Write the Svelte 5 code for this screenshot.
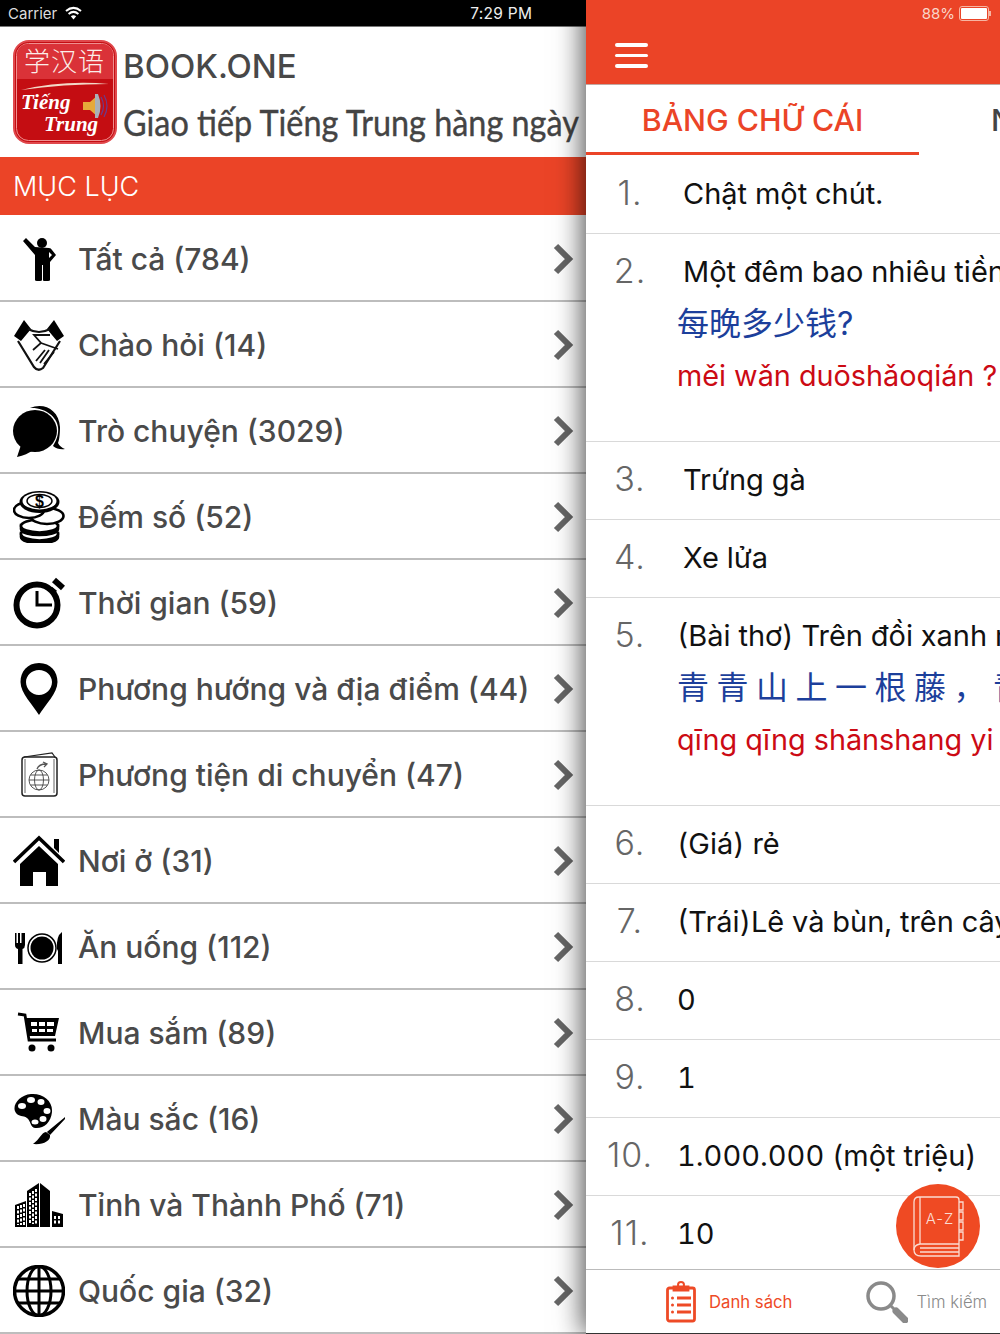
<script>
  const topics = [
    { label: 'Tất cả (784)', icon: person },
    { label: 'Chào hỏi (14)', icon: handshake },
    { label: 'Trò chuyện (3029)', icon: chat },
    { label: 'Đếm số (52)', icon: coins },
    { label: 'Thời gian (59)', icon: timer },
    { label: 'Phương hướng và địa điểm (44)', icon: pin },
    { label: 'Phương tiện di chuyển (47)', icon: passport },
    { label: 'Nơi ở (31)', icon: house },
    { label: 'Ăn uống (112)', icon: dining },
    { label: 'Mua sắm (89)', icon: cart },
    { label: 'Màu sắc (16)', icon: palette },
    { label: 'Tỉnh và Thành Phố (71)', icon: city },
    { label: 'Quốc gia (32)', icon: globe }
  ];

  // indent: the first rows carry a leading space in the source text
  const phrases = [
    { text: 'Chật một chút.', indent: true },
    { text: 'Một đêm bao nhiêu tiền?', indent: true, zh: '每晚多少钱?', py: 'měi wǎn duōshǎoqián ?' },
    { text: 'Trứng gà', indent: true },
    { text: 'Xe lửa', indent: true },
    { text: '(Bài thơ) Trên đồi xanh mọc một dây leo', zh: '青 青 山 上 一 根 藤 ， 青 青', py: 'qīng qīng shānshang yi gēn téng' },
    { text: '(Giá) rẻ' },
    { text: '(Trái)Lê và bùn, trên cây' },
    { text: '0' },
    { text: '1' },
    { text: '1.000.000 (một triệu)' },
    { text: '10', last: true }
  ];
</script>

{#snippet person()}
  <circle cx="29" cy="10" r="5" />
  <path d="M10 8 L13 5 L22 14 L36 15 Q38 15 39 17 L43 22 L37 29 L37 47 Q37 48 35 48 L31 48 Q30 48 30 47 L30 32 L29 32 L29 47 Q29 48 27 48 L24 48 Q22 48 22 47 L22 22 Z" />
  <path d="M36 19 L39 22 L36 25 Z" fill="#fff" />
{/snippet}

{#snippet handshake()}
  <path d="M1 17 L11 1 L18 10 L8 22 Z M51 17 L41 1 L34 10 L44 22 Z" />
  <g fill="none" stroke="#111">
    <path d="M5 22 L21 48 Q25 53 30 49 L47 22" stroke-width="2.200" />
    <path d="M15 10 Q26 16 37 10" stroke-width="2" />
    <path d="M37 16 L21 16 L28 24 L20 31 M28 24 L45 30" stroke-width="1.800" />
    <path d="M41 33 L31 45 M36 31 L27 44 M32 31 L23 42" stroke-width="1.800" />
  </g>
{/snippet}

{#snippet chat()}
  <path d="M17 3 C30 -3 46 4 47 22 C47 30 46 36 45 38 Q47 42 52 44 Q45 45 40 41 C43 36 46 30 45 22 C44 12 32 2 17 3 Z" />
  <ellipse cx="22" cy="26" rx="22" ry="21" />
  <path d="M8 40 L4 52 Q14 50 20 45 Z" />
{/snippet}

{#snippet coins()}
  <g fill="#fff" stroke="#000" stroke-width="2.600">
    <path d="M8 42 L8 46 C8 54 45 54 45 46 L45 42 Z" fill="#000" />
    <ellipse cx="26.500" cy="43" rx="18.500" ry="6.500" />
    <path d="M8 34 L8 38 C8 46 45 46 45 38 L45 34 Z" fill="#000" />
    <ellipse cx="26.500" cy="35" rx="18.500" ry="6.500" />
    <ellipse cx="34" cy="25" rx="16.500" ry="8" />
    <ellipse cx="16" cy="19" rx="15" ry="8" />
    <ellipse cx="26.500" cy="11" rx="20" ry="11" fill="#000" stroke="none" />
    <ellipse cx="26.500" cy="10" rx="17" ry="8.500" stroke="none" />
    <ellipse cx="26.500" cy="10" rx="12.500" ry="6.500" fill="none" stroke-width="1.400" />
  </g>
  <text x="26.500" y="15.500" class="dollar">$</text>
{/snippet}

{#snippet timer()}
  <circle cx="24" cy="28" r="20.500" fill="none" stroke="#000" stroke-width="6" />
  <path d="M24 14 L24 28 L39 28" fill="none" stroke="#000" stroke-width="3" />
  <path d="M41 3 L50 11" stroke="#000" stroke-width="6" />
  <path d="M38 11 L43 15" stroke="#000" stroke-width="3" />
{/snippet}

{#snippet pin()}
  <path fill-rule="evenodd" d="M26 0 C14 0 7.500 9 7.500 19 C7.500 30 20 42 26 52 C32 42 44.500 30 44.500 19 C44.500 9 38 0 26 0 Z M26 7 C33 7 39 12.500 39 19 C39 26 33 32 26 32 C19 32 13 26 13 19 C13 12.500 19 7 26 7 Z" />
{/snippet}

{#snippet passport()}
  <g fill="none" stroke="#222">
    <rect x="9" y="8" width="35" height="39" rx="3" stroke-width="1.500" />
    <path d="M11 8 L39 4 L42 8" stroke-width="1.200" />
    <path d="M12 10 L12 44 M41 10 L41 44" stroke-width="0.700" />
    <g stroke-width="0.900" stroke="#444">
      <circle cx="26" cy="31" r="10" />
      <ellipse cx="26" cy="31" rx="4.500" ry="10" />
      <path d="M16 31 L36 31 M17.500 26 L34.500 26 M17.500 36 L34.500 36" />
    </g>
    <path d="M24 20 Q26 15 33 15 M30 13 L34 15 L31 18" stroke-width="1.300" stroke="#555" />
  </g>
{/snippet}

{#snippet house()}
  <path d="M1 27 L26 3 L51 27" fill="none" stroke="#000" stroke-width="3.500" />
  <path d="M41 4 L46 4 L46 18 L41 13 Z" />
  <path d="M7 51 L7 29 L26 11 L45 29 L45 51 L33 51 L33 37 L20 37 L20 51 Z" />
{/snippet}

{#snippet dining()}
  <path d="M2 12 L3.500 12 L3.500 22 L5 22 L5 12 L7 12 L7 22 L8.500 22 L8.500 12 L10 12 L10 12 L12 12 L12 24 Q12 27 9.500 28 L9.500 43 L5 43 L5 28 Q2 27 2 24 Z" />
  <circle cx="29" cy="27" r="14" fill="none" stroke="#000" stroke-width="1.500" />
  <circle cx="29" cy="27" r="11.500" />
  <path d="M49 11 L49 43 L45 43 L45 30 L44 28 Q43 15 49 11 Z" />
{/snippet}

{#snippet cart()}
  <path d="M5 7 L12 8 L16 33 L43 33" fill="none" stroke="#000" stroke-width="2.800" />
  <path fill-rule="evenodd" d="M13 11 L46 11 L42 29 L16 29 Z M18 15 L18 19 L24 19 L24 15 Z M26 15 L26 19 L32 19 L32 15 Z M34 15 L34 19 L41 19 L41 15 Z M19 22 L19 25 L24 25 L24 22 Z M26 22 L26 25 L32 25 L32 22 Z M34 22 L34 25 L40 25 L40 22 Z" />
  <circle cx="19" cy="41" r="3.500" />
  <circle cx="38" cy="41" r="3.500" />
{/snippet}

{#snippet palette()}
  <path fill-rule="evenodd" d="M18 1 C30 0 40 8 39 19 C38 30 30 36 22 35 C17 34 18 28 14 25 C10 22 6 24 3 20 C-2 13 6 2 18 1 Z" />
  <g fill="#fff">
    <ellipse cx="9" cy="13" rx="4" ry="3" />
    <ellipse cx="18" cy="7" rx="4" ry="3" />
    <ellipse cx="28" cy="9" rx="3.500" ry="3" />
    <ellipse cx="34" cy="18" rx="3.500" ry="3" />
    <ellipse cx="30" cy="26" rx="3.500" ry="3" />
    <ellipse cx="22" cy="29" rx="3.500" ry="2.500" />
  </g>
  <path d="M52 25 L35 39 L37 41 Z" stroke="#000" stroke-width="1.500" />
  <path d="M33 39 C28 40 27 46 20 51 C30 52 38 48 37 42 Z" />
{/snippet}

{#snippet city()}
  <path d="M14 12 L26 4 L26 48 L14 48 Z M27 4 L37 12 L37 48 L27 48 Z M2 26 L13 22 L13 48 L2 48 Z M39 32 L50 35 L50 48 L39 48 Z" />
  <g stroke="#fff" stroke-width="2" stroke-dasharray="3 1.500">
    <path d="M17 14 L17 45 M20 12 L20 45 M23 10 L23 45" />
    <path d="M5 27 L5 46 M8 26 L8 46 M11 25 L11 46" />
    <path d="M42 37 L42 46 M46 37 L46 46" />
  </g>
{/snippet}

{#snippet globe()}
  <g fill="none" stroke="#000" stroke-width="3">
    <circle cx="26" cy="26" r="24.500" stroke-width="3.500" />
    <ellipse cx="26" cy="26" rx="12" ry="24.500" />
    <path d="M26 2 L26 50 M2 26 L50 26 M5 14 L47 14 M5 38 L47 38" />
  </g>
{/snippet}

<div class="screen">
  <aside class="menu">
    <div class="status">
      <span>Carrier</span>
      <svg class="wifi" width="19" height="14" viewBox="0 0 19 14">
        <path d="M9.500 13.500 L6.800 10.300 Q9.500 8.100 12.200 10.300 Z" fill="#fff" />
        <path d="M4.600 7.900 Q9.500 3.800 14.400 7.900 M2 5 Q9.500 -1.200 17 5" fill="none" stroke="#fff" stroke-width="2" />
      </svg>
      <span class="clock">7:29 PM</span>
    </div>

    <header class="brand">
      <svg class="logo" width="104" height="104" viewBox="0 0 104 104">
        <rect x="1" y="1" width="102" height="102" rx="15" fill="#c40d12" stroke="#e0484c" stroke-width="2" />
        <rect x="3.500" y="3.500" width="97" height="97" rx="12" fill="none" stroke="#ef8f8f" stroke-width="1" />
        <path d="M4 39 L4 16 Q4 4 16 4 L88 4 Q100 4 100 16 L100 39 Z" fill="#da3238" />
        <path d="M8 50 Q50 40 96 44 Q50 44 8 50 Z" fill="#f3d9c8" />
        <text x="51.500" y="31" class="logo-zh">学汉语</text>
        <text x="8" y="69" class="logo-latin">Tiếng</text>
        <text x="31" y="91" class="logo-latin">Trung</text>
        <path d="M70 62 L77 62 L85 55 L85 77 L77 70 L70 70 Z" fill="#e6a93a" />
        <path d="M85 54 Q90 66 85 78 L82 78 L82 54 Z" fill="#aab0b8" />
        <path d="M88 57 Q93 66 88 75 M91 55 Q97 66 91 77" fill="none" stroke="#6b3b8c" stroke-width="1.200" />
      </svg>
      <div class="brand-text">
        <div class="brand-name">BOOK.ONE</div>
        <div class="brand-tag">Giao tiếp Tiếng Trung hàng ngày</div>
      </div>
    </header>

    <div class="menu-title">MỤC LỤC</div>

    <ul class="topics">
      {#each topics as topic}
        <li class="topic">
          <svg class="topic-icon" width="52" height="52" viewBox="0 0 52 52">
            {@render topic.icon()}
          </svg>
          <span class="topic-label">{topic.label}</span>
          <svg class="chevron" width="22" height="32" viewBox="0 0 22 32">
            <path d="M4 3 L17 16 L4 29" fill="none" stroke="#666" stroke-width="6" />
          </svg>
        </li>
      {/each}
    </ul>
  </aside>

  <main class="pane">
    <div class="topbar">
      <div class="battery-row">
        <span>88%</span>
        <span class="battery"><span class="battery-fill"></span></span>
        <span class="battery-tip"></span>
      </div>
      <div class="burger"><span></span><span></span><span></span></div>
    </div>

    <nav class="tabs">
      <div class="tab active">BẢNG CHỮ CÁI</div>
      <div class="tab">NGỮ PHÁP</div>
    </nav>

    <ol class="phrases">
      {#each phrases as item, i}
        <li class="phrase" class:last={item.last}>
          <span class="num">{i + 1}.</span>
          <div class="body">
            <div class="vi" class:indent={item.indent}>{item.text}</div>
            {#if item.zh}
              <div class="zh">{item.zh}</div>
              <div class="py">{item.py}</div>
            {/if}
          </div>
        </li>
      {/each}
    </ol>

    <div class="fab">
      <svg width="84" height="84" viewBox="0 0 84 84" fill="none" stroke="#fbdcd2" stroke-width="1.300">
        <path d="M23 13 L60 13 Q63 13 63 16 L63 72 L25 72 Q18 72 18 66 L18 18 Q18 13 23 13 Z" />
        <path d="M24 13 L24 60 Q18 61 18 66 M24 60 L63 60 M24 64 L63 64 M24 68 L63 68" />
        <path d="M63 18 L67 18 L67 26 L63 26 M63 28 L67 28 L67 36 L63 36 M63 38 L67 38 L67 46 L63 46 M63 48 L67 48 L67 56 L63 56" />
        <text x="44" y="40" class="fab-text">A-Z</text>
      </svg>
    </div>

    <footer class="tabbar">
      <div class="bar-item on">
        <svg width="30" height="42" viewBox="0 0 30 42" fill="none" stroke="#ee4a26" stroke-width="2.800">
          <rect x="1.500" y="7" width="27" height="33" rx="2" />
          <path d="M8 6 L22 6 L22 9 L8 9 Z" fill="#ee4a26" />
          <circle cx="15" cy="4" r="3" stroke-width="2" />
          <path d="M11 17 L25 17 M11 24 L25 24 M11 31 L25 31" />
          <circle cx="6.500" cy="17" r="1.500" fill="#ee4a26" stroke="none" />
          <circle cx="6.500" cy="24" r="1.500" fill="#ee4a26" stroke="none" />
          <circle cx="6.500" cy="31" r="1.500" fill="#ee4a26" stroke="none" />
        </svg>
        <span>Danh sách</span>
      </div>
      <div class="bar-item">
        <svg width="42" height="42" viewBox="0 0 42 42" fill="none" stroke="#8a8a8a">
          <circle cx="15" cy="15" r="13" stroke-width="3.500" />
          <path d="M25 25 L29 29" stroke-width="3" />
          <path d="M30 30 L39 39" stroke-width="7" stroke-linecap="round" />
        </svg>
        <span>Tìm kiếm</span>
      </div>
    </footer>
  </main>
</div>

<style>
  :global(body) {
    margin: 0;
    background: #fff;
  }

  .screen {
    display: flex;
    width: 1000px;
    height: 1334px;
    overflow: hidden;
    font-family: Inter, "Noto Sans CJK SC", sans-serif;
  }

  /* left drawer */
  .menu {
    width: 586px;
    flex: none;
    display: flex;
    flex-direction: column;
  }

  .status {
    height: 26px;
    flex: none;
    display: flex;
    align-items: center;
    padding-left: 8px;
    background: #000;
    color: #ddd;
    font-size: 15px;
    border-bottom: 1px solid #777;
  }

  .wifi {
    margin-left: 7px;
  }

  .clock {
    margin-left: 387px;
    font-size: 15.500px;
    letter-spacing: 0.300px;
    color: #eee;
  }

  .brand {
    height: 130px;
    flex: none;
    display: flex;
    align-items: flex-start;
    gap: 6px;
    padding: 13px 0 0 13px;
    box-sizing: border-box;
    color: #484848;
  }

  .logo {
    flex: none;
  }

  .logo-zh {
    font-family: "Noto Sans CJK SC", sans-serif;
    font-size: 26px;
    font-weight: 300;
    fill: #fbeeea;
    text-anchor: middle;
    letter-spacing: 1px;
  }

  .logo-latin {
    font-family: "Liberation Serif", serif;
    font-size: 21px;
    font-style: italic;
    font-weight: 700;
    fill: #fff;
  }

  .brand-text {
    white-space: nowrap;
  }

  .brand-name {
    height: 52px;
    line-height: 52px;
    font-size: 33px;
    font-weight: 500;
  }

  /* handwritten face in the source: nearest here is a squeezed Lato */
  .brand-tag {
    line-height: 60px;
    font-family: Lato, sans-serif;
    font-size: 37px;
    color: #444;
    -webkit-text-stroke: 0.4px #444;
    transform: scaleX(0.875);
    transform-origin: left center;
  }

  .menu-title {
    height: 58px;
    flex: none;
    line-height: 60px;
    padding-left: 13px;
    background: #eb4427;
    color: #fff;
    font-size: 27px;
    font-weight: 300;
  }

  .topics {
    margin: 1px 0 0;
    padding: 0;
    list-style: none;
  }

  .topic {
    height: 86px;
    box-sizing: border-box;
    display: flex;
    align-items: center;
    padding: 2px 12px 0 13px;
    border-bottom: 2px solid #bdbdbd;
    color: #4a4a4a;
  }

  .topic-icon {
    flex: none;
    margin-right: 13px;
    fill: #000;
  }

  .dollar {
    font-family: "Liberation Sans", sans-serif;
    font-size: 16px;
    font-weight: 700;
    fill: #000;
    stroke: none;
    text-anchor: middle;
  }

  .topic-label {
    flex: 1;
    font-size: 30px;
    font-weight: 500;
    white-space: nowrap;
  }

  .chevron {
    flex: none;
  }

  /* right pane */
  .pane {
    position: relative;
    z-index: 1;
    width: 414px;
    flex: none;
    display: flex;
    flex-direction: column;
    background: #fff;
    box-shadow: -3px 0 26px rgba(0, 0, 0, 0.7);
  }

  .topbar {
    position: relative;
    height: 85px;
    flex: none;
    box-sizing: border-box;
    background: #eb4427;
    border-bottom: 1px solid #c2a8a2;
  }

  .battery-row {
    display: flex;
    align-items: center;
    justify-content: flex-end;
    height: 27px;
    padding-right: 9px;
    color: #f9d5c9;
    font-size: 15px;
  }

  .battery {
    display: block;
    width: 26px;
    height: 11px;
    margin-left: 4px;
    padding: 1px;
    border: 1px solid #f7b5a2;
    border-radius: 3px;
  }

  .battery-fill {
    display: block;
    width: 100%;
    height: 100%;
    background: #fff;
    border-radius: 1px;
  }

  .battery-tip {
    width: 2px;
    height: 5px;
    background: #f7b5a2;
  }

  .burger {
    display: flex;
    flex-direction: column;
    gap: 7px;
    width: 33px;
    margin: 16px 0 0 29px;
  }

  .burger span {
    height: 3.500px;
    background: #fff;
    border-radius: 2px;
  }

  .tabs {
    height: 70px;
    flex: none;
    display: flex;
    white-space: nowrap;
    overflow: hidden;
    font-size: 30.300px;
    font-weight: 500;
    color: #444;
  }

  .tab {
    flex: none;
    width: 333px;
    box-sizing: border-box;
    line-height: 70px;
    text-align: center;
  }

  .tab + .tab {
    padding-left: 72px;
    text-align: left;
  }

  .active {
    color: #eb4427;
    border-bottom: 3.500px solid #eb4427;
  }

  .phrases {
    flex: 1;
    margin: 0;
    padding: 1px 0 0;
    list-style: none;
    overflow: hidden;
  }

  .phrase {
    display: flex;
    min-height: 78px;
    box-sizing: border-box;
    padding: 12px 0 13px;
    border-bottom: 1px solid #d9d9d9;
  }

  .phrase:has(.zh) {
    padding-bottom: 39px;
  }

  .phrase.last {
    border-bottom: 0;
  }

  .num {
    flex: none;
    width: 88px;
    text-align: center;
    line-height: 50px;
    font-size: 34px;
    font-weight: 300;
    letter-spacing: 1px;
    color: #666;
  }

  .body {
    min-width: 0;
    margin-left: 3px;
    white-space: nowrap;
    line-height: 52px;
  }

  .vi {
    font-size: 29px;
    font-variant-numeric: tabular-nums;
    color: #111;
  }

  .indent {
    padding-left: 6px;
  }

  .zh {
    font-size: 32px;
    word-spacing: -1.500px;
    color: #1c3f9b;
  }

  .py {
    font-size: 28.800px;
    color: #cc0a14;
  }

  .fab {
    position: absolute;
    left: 310px;
    top: 1184px;
    width: 84px;
    height: 84px;
    border-radius: 50%;
    background: #ef4a23;
  }

  .fab-text {
    font-size: 15px;
    font-weight: 300;
    fill: #fbdcd2;
    stroke: none;
    text-anchor: middle;
    letter-spacing: 1px;
  }

  .tabbar {
    height: 65px;
    flex: none;
    box-sizing: border-box;
    display: flex;
    align-items: center;
    border-top: 1px solid #bbb;
    border-bottom: 1px solid #333;
    color: #8a8a8a;
    font-size: 16.700px;
    font-weight: 300;
    white-space: nowrap;
    padding-left: 80px;
  }

  .bar-item {
    display: flex;
    align-items: center;
  }

  .bar-item span {
    margin-left: 13px;
  }

  .bar-item + .bar-item {
    margin-left: 74px;
  }

  .bar-item + .bar-item span {
    margin-left: 8px;
  }

  .on {
    color: #ee4a26;
    font-weight: 400;
  }
</style>
